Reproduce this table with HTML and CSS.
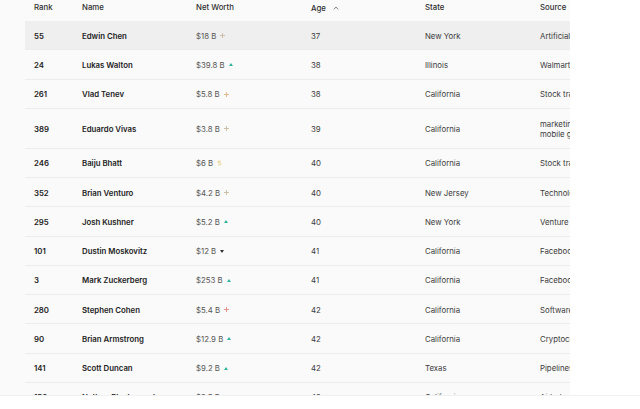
FILE: index.html
```html
<!DOCTYPE html>
<html>
<head>
<meta charset="utf-8">
<link rel="stylesheet" href="styles.css">
</head>
<body>
<div class="page">
  <div class="table">
    <div class="row head">
      <div>Rank</div><div>Name</div><div>Net Worth</div>
      <div>Age <span class="caret"><svg width="6" height="4" viewBox="0 0 6 4"><path d="M0.8 3.4 L3 1 L5.2 3.4" fill="none" stroke="#777" stroke-width="0.9"/></svg></span></div>
      <div>State</div><div>Source</div>
    </div>
    <div class="row hl">
      <div class="rank">55</div><div class="name">Edwin Chen</div>
      <div class="nw">$18 B <i class="ic plus tan"></i></div><div>37</div><div>New York</div><div>Artificial Intelligence</div>
    </div>
    <div class="row">
      <div class="rank">24</div><div class="name">Lukas Walton</div>
      <div class="nw">$39.8 B <i class="ic up"></i></div><div>38</div><div>Illinois</div><div>Walmart</div>
    </div>
    <div class="row">
      <div class="rank">261</div><div class="name">Vlad Tenev</div>
      <div class="nw">$5.8 B <i class="ic plus org"></i></div><div>38</div><div>California</div><div>Stock trading app</div>
    </div>
    <div class="row tall">
      <div class="rank">389</div><div class="name">Eduardo Vivas</div>
      <div class="nw">$3.8 B <i class="ic plus tan"></i></div><div>39</div><div>California</div><div class="two">marketing software,<br>mobile games</div>
    </div>
    <div class="row">
      <div class="rank">246</div><div class="name">Baiju Bhatt</div>
      <div class="nw">$6 B <span class="ic arc"><svg width="5" height="6" viewBox="0 0 5 6"><path d="M1 1.2 H3.8 M1.2 1.2 L1 3 C2 2.4 4.2 2.6 4 4 C3.8 5.4 1.8 5.5 1 4.6" fill="none" stroke="#e2cc7a" stroke-width="0.8"/></svg></span></div><div>40</div><div>California</div><div>Stock trading app</div>
    </div>
    <div class="row">
      <div class="rank">352</div><div class="name">Brian Venturo</div>
      <div class="nw">$4.2 B <i class="ic plus tan"></i></div><div>40</div><div>New Jersey</div><div>Technology</div>
    </div>
    <div class="row">
      <div class="rank">295</div><div class="name">Josh Kushner</div>
      <div class="nw">$5.2 B <i class="ic up"></i></div><div>40</div><div>New York</div><div>Venture capital</div>
    </div>
    <div class="row">
      <div class="rank">101</div><div class="name">Dustin Moskovitz</div>
      <div class="nw">$12 B <i class="ic down"></i></div><div>41</div><div>California</div><div>Facebook</div>
    </div>
    <div class="row">
      <div class="rank">3</div><div class="name">Mark Zuckerberg</div>
      <div class="nw">$253 B <i class="ic up"></i></div><div>41</div><div>California</div><div>Facebook</div>
    </div>
    <div class="row">
      <div class="rank">280</div><div class="name">Stephen Cohen</div>
      <div class="nw">$5.4 B <i class="ic plus red"></i></div><div>42</div><div>California</div><div>Software</div>
    </div>
    <div class="row">
      <div class="rank">90</div><div class="name">Brian Armstrong</div>
      <div class="nw">$12.9 B <i class="ic up"></i></div><div>42</div><div>California</div><div>Cryptocurrency</div>
    </div>
    <div class="row">
      <div class="rank">141</div><div class="name">Scott Duncan</div>
      <div class="nw">$9.2 B <i class="ic up"></i></div><div>42</div><div>Texas</div><div>Pipelines</div>
    </div>
    <div class="row">
      <div class="rank">150</div><div class="name">Nathan Blecharczyk</div>
      <div class="nw">$9.5 B <i class="ic up"></i></div><div>42</div><div>California</div><div>Airbnb</div>
    </div>
  </div>
</div>
</body>
</html>
```

FILE: styles.css
```css
html, body {
  margin: 0;
  padding: 0;
  background: #ffffff;
}
body {
  font-family: Inter, "Noto Sans", sans-serif;
  font-size: 7.8px;
  color: #3a3a3a;
}
.page {
  height: 395px;
  overflow: hidden;
  border-bottom: 1px solid #f0f0f0;
  box-shadow: 0 1px 2px rgba(0,0,0,0.04);
  background: linear-gradient(to right, #fafafa 0, #fafafa 570px, #ffffff 570px);
}
.table {
  margin-left: 25px;
  width: 545px;
  overflow: hidden;
}
.row {
  display: grid;
  grid-template-columns: 48px 114px 115px 114px 115px 200px;
  align-items: center;
  height: 29.25px;
  box-sizing: border-box;
  border-bottom: 1px solid #ececec;
  white-space: nowrap;
  padding-top: 1px;
}
.row > div {
  padding-left: 9px;
  overflow: hidden;
}
.row.head {
  height: 21px;
  border-bottom: none;
  color: #2e2e2e;
  font-weight: 500;
  align-items: start;
  padding-top: 2px;
}
.row.hl {
  background: #efefef;
}
.row.tall {
  height: 40px;
}
.two {
  line-height: 10px;
  white-space: nowrap;
}
.rank, .name {
  font-weight: 600;
  color: #222;
}
.nw {
  color: #555;
  display: flex;
  align-items: center;
  gap: 4px;
}
.caret {
  display: inline-block;
  margin-left: 5px;
  vertical-align: 1px;
}
.ic {
  display: inline-block;
  position: relative;
  width: 5px;
  height: 5px;
}
.plus::before, .plus::after {
  content: "";
  position: absolute;
  background: currentColor;
}
.plus::before {
  left: 0;
  top: 2px;
  width: 5px;
  height: 1px;
}
.plus::after {
  left: 2px;
  top: 0;
  width: 1px;
  height: 5px;
}
.tan { color: #cdbfa8; }
.org { color: #e2b98a; }
.red { color: #e8908a; }
.up {
  width: 0;
  height: 0;
  border-left: 2.5px solid transparent;
  border-right: 2.5px solid transparent;
  border-bottom: 3.5px solid #2fb4a0;
}
.down {
  width: 0;
  height: 0;
  border-left: 2.5px solid transparent;
  border-right: 2.5px solid transparent;
  border-top: 3.5px solid #333;
}
.arc {
  width: 5px;
  height: 6px;
}
.arc svg {
  display: block;
}
```
